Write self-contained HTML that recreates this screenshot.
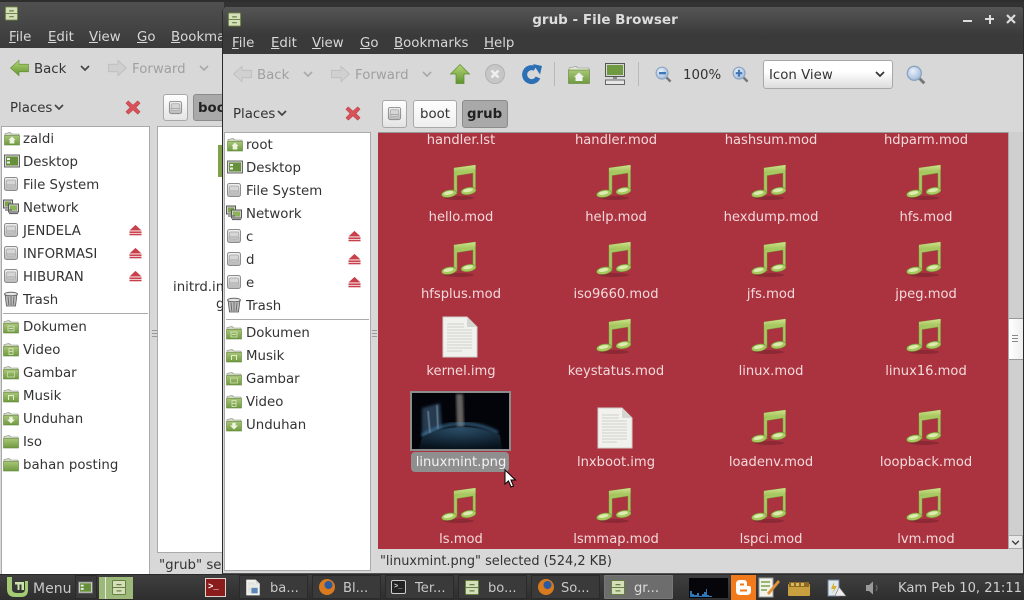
<!DOCTYPE html>
<html><head><meta charset="utf-8"><title>grub - File Browser</title>
<style>
html,body{margin:0;padding:0;width:1024px;height:600px;overflow:hidden;background:#333}
body{position:relative;font-family:"DejaVu Sans","Liberation Sans",sans-serif;font-size:13.33px;color:#333}
div,span.a,svg.a{position:absolute}
.t{position:absolute;white-space:nowrap;line-height:20px;height:16px}
.m{color:#d8d8d8}
.g{color:#a0a0a0}
.l{position:absolute;width:150px;text-align:center;white-space:nowrap;line-height:20px;height:16px;color:#f3d9da;font-size:13.1px}
svg.i{position:absolute;overflow:visible}
.btn{background:linear-gradient(#fff,#e4e4e4);border:1px solid #a8a8a8;border-radius:3px;box-sizing:border-box}
.on{background:#a9a9a9;border:1px solid #8c8c8c;border-radius:3px;box-sizing:border-box}
.tb{position:absolute;top:575px;height:24px;width:69px;background:#3a3a3a;border:1px solid #2a2a2a;box-sizing:border-box;border-radius:1px}
.tt{position:absolute;top:579px;color:#c8c8c8;white-space:nowrap;line-height:20px;font-size:13.1px}
</style></head><body>
<svg width="0" height="0" style="position:absolute">
<defs>
<linearGradient id="ng" x1="0" y1="0" x2="0" y2="1"><stop offset="0" stop-color="#cfe38c"/><stop offset="1" stop-color="#9cbf55"/></linearGradient>
<linearGradient id="fg" x1="0" y1="0" x2="0" y2="1"><stop offset="0" stop-color="#a9c777"/><stop offset="1" stop-color="#6f9a3f"/></linearGradient>
<linearGradient id="dg" x1="0" y1="0" x2="0" y2="1"><stop offset="0" stop-color="#f2f2f2"/><stop offset="1" stop-color="#b8b8b8"/></linearGradient>
<linearGradient id="ag" x1="0" y1="0" x2="0" y2="1"><stop offset="0" stop-color="#b6d676"/><stop offset="1" stop-color="#5f9430"/></linearGradient>
<radialGradient id="mg" cx=".4" cy=".35" r=".7"><stop offset="0" stop-color="#eaf1fa"/><stop offset="1" stop-color="#9db8d8"/></radialGradient>
<filter id="b1"><feGaussianBlur stdDeviation="1.200"/></filter>
<filter id="b2"><feGaussianBlur stdDeviation=".5"/></filter>
<symbol id="note" viewBox="0 0 40 40">
<ellipse cx="19" cy="36" rx="15" ry="2" fill="#000" opacity=".18"/>
<path d="M14 6 L35.500 3 V29 H33 V11 L17 13.500 V32 H14Z" fill="#a8c862" stroke="#7f9f3e" stroke-width=".5"/>
<path d="M14 6 L35.500 3 V8 L14 11Z" fill="url(#ng)"/>
<ellipse cx="9" cy="31.700" rx="7.500" ry="3.600" transform="rotate(-10 9 31.700)" fill="#a9c95f" stroke="#6d8c35" stroke-width=".5"/>
<ellipse cx="8.500" cy="31" rx="5" ry="1.800" transform="rotate(-10 8.500 31)" fill="#dcebb0"/>
<ellipse cx="28.500" cy="29" rx="7.500" ry="3.600" transform="rotate(-10 28.500 29)" fill="#a9c95f" stroke="#6d8c35" stroke-width=".5"/>
<ellipse cx="28" cy="28.300" rx="5" ry="1.800" transform="rotate(-10 28 28.300)" fill="#dcebb0"/>
</symbol>
<symbol id="doc" viewBox="0 0 36 42">
<path d="M1 1 H25 L35 11 V41 H1Z" fill="#f1f1ee" stroke="#cfcfcb" stroke-width="1"/>
<path d="M25 1 L35 11 H25Z" fill="#d4d4d0"/>
<path d="M5 8H22M5 11H22M5 14H30M5 17H30M5 20H30M5 23H30M5 26H30M5 29H30M5 32H30M5 35H20" stroke="#c4c4c0" stroke-width=".8"/>
</symbol>
<symbol id="fold" viewBox="0 0 16 16">
<path d="M1 3.500 L6 2.500 L8 4 H15 V7 H1Z" fill="#d2d8c6" stroke="#8a8f7e" stroke-width=".6"/>
<rect x=".5" y="5.500" width="15" height="9.500" fill="url(#fg)" stroke="#62853a" stroke-width=".6"/>
</symbol>
<symbol id="fhome" viewBox="0 0 16 16"><use href="#fold" width="16" height="16"/><path d="M8 6.500L11.500 10H10.300V13.500H5.700V10H4.500Z" fill="#eef3e2"/></symbol>
<symbol id="fdoc" viewBox="0 0 16 16"><use href="#fold" width="16" height="16"/><path d="M5 8H11V13H5Z" fill="none" stroke="#dfe9cc" stroke-width=".8"/><path d="M6 10.500H10" stroke="#dfe9cc" stroke-width=".8"/></symbol>
<symbol id="fvid" viewBox="0 0 16 16"><use href="#fold" width="16" height="16"/><path d="M6 7.500H10V13.500H6Z M6 10.500H10" fill="none" stroke="#dfe9cc" stroke-width=".8"/></symbol>
<symbol id="fpic" viewBox="0 0 16 16"><use href="#fold" width="16" height="16"/><rect x="4.500" y="8" width="7" height="5" fill="none" stroke="#cfdcb6" stroke-width=".8"/></symbol>
<symbol id="fmus" viewBox="0 0 16 16"><use href="#fold" width="16" height="16"/><path d="M5.500 13V8.500H10.500V13" fill="none" stroke="#e4edd2" stroke-width="1"/></symbol>
<symbol id="fdl" viewBox="0 0 16 16"><use href="#fold" width="16" height="16"/><path d="M6.300 6.800H9.700V9.500H12L8 13.500L4 9.500H6.300Z" fill="#eef3e2"/></symbol>
<symbol id="drive" viewBox="0 0 16 16">
<rect x="1.500" y="1.500" width="13" height="13" rx="2" fill="url(#dg)" stroke="#8c8c8c"/>
<rect x="3.500" y="4" width="9" height="7" rx="1" fill="#d6d6d6" stroke="#a6a6a6" stroke-width=".7"/>
<path d="M4 9H12" stroke="#999" stroke-width=".8"/>
</symbol>
<symbol id="desk" viewBox="0 0 16 16">
<rect x=".5" y="2" width="15" height="12" fill="#d8d8d8" stroke="#666"/>
<rect x="2" y="3.500" width="12" height="9" fill="#66913a"/>
<rect x="3" y="5" width="3" height="2" fill="#eee"/><rect x="3" y="8.500" width="3" height="2" fill="#eee"/>
</symbol>
<symbol id="net" viewBox="0 0 16 16">
<rect x=".5" y="1" width="9" height="8" fill="#cfcfcf" stroke="#555"/><rect x="2" y="2.500" width="6" height="5" fill="#7ba34b"/>
<rect x="5.500" y="5" width="10" height="8" fill="#cfcfcf" stroke="#555"/><rect x="7" y="6.500" width="7" height="5" fill="#8cb356"/>
<path d="M2 11 H9 M6 14.500 H15" stroke="#666" stroke-width="1.200"/>
</symbol>
<symbol id="trash" viewBox="0 0 16 16">
<path d="M2 3 H14 L12.500 15 H3.500Z" fill="#bcbcbc" stroke="#555" stroke-width=".8"/>
<ellipse cx="8" cy="3" rx="6.500" ry="1.800" fill="#e6e6e6" stroke="#555" stroke-width=".8"/>
<path d="M5 5.500 L5.800 14 M8 5.500V14 M11 5.500 L10.200 14" stroke="#666" stroke-width=".9"/>
</symbol>
<symbol id="ej" viewBox="0 0 14 12">
<path d="M7 .5 L13.500 6.500 H.5Z" fill="#c8404c"/><rect x=".5" y="7.500" width="13" height="1.700" fill="#c8404c"/><rect x=".5" y="10" width="13" height="1.700" fill="#c8404c"/>
</symbol>
<symbol id="x" viewBox="0 0 16 16">
<path d="M3 1 L8 5.500 L13 1 L15.500 3.500 L11 8 L15.500 12.500 L13 15 L8 10.500 L3 15 L.5 12.500 L5 8 L.5 3.500Z" fill="#d9525a" stroke="#b93a42" stroke-width=".6"/>
</symbol>
<symbol id="chev" viewBox="0 0 10 6"><path d="M1 1 L5 5 L9 1" fill="none" stroke="currentColor" stroke-width="1.700"/></symbol>
<symbol id="arrL" viewBox="0 0 20 18"><path d="M.5 9 L9.500 .8 V5 H19.500 V13 H9.500 V17.200Z"/></symbol>
<symbol id="arrR" viewBox="0 0 20 18"><path d="M19.500 9 L10.500 .8 V5 H.5 V13 H10.500 V17.200Z"/></symbol>
<symbol id="mag" viewBox="0 0 18 18">
<path d="M11.500 11.500 L16.500 16.500" stroke="#777" stroke-width="2.600"/>
<circle cx="7.500" cy="7.500" r="6.300" fill="url(#mg)" stroke="#8ba3c0" stroke-width="1.200"/>
</symbol>
<symbol id="cab" viewBox="0 0 16 16">
<rect x="1.500" y="1" width="13" height="14" rx="1" fill="#d5e0bb" stroke="#67803f"/>
<path d="M1.500 8H14.500" stroke="#67803f"/><path d="M5.500 4.500H10.500V5.800H5.500Z M5.500 10.800H10.500V12H5.500Z" fill="#67803f"/>
</symbol>
</defs></svg>

<!-- back window -->
<div style="left:0;top:0;width:1024px;height:2px;background:#2e2e2e"></div>
<div style="left:0;top:2px;width:224px;height:46px;background:linear-gradient(#505050,#3a3a3a)"></div>
<svg class="i" style="left:4px;top:6px" width="15" height="15"><use href="#cab"/></svg>
<div class="t m" style="left:9px;top:28px"><u>F</u>ile</div>
<div class="t m" style="left:48px;top:28px"><u>E</u>dit</div>
<div class="t m" style="left:89px;top:28px"><u>V</u>iew</div>
<div class="t m" style="left:137px;top:28px"><u>G</u>o</div>
<div class="t m" style="left:171px;top:28px"><u>B</u>ookma</div>
<div style="left:0;top:48px;width:224px;height:527px;background:#d8d8d8"></div>
<svg class="i" style="left:10px;top:59px;fill:url(#ag);stroke:#5e8a30;stroke-width:.6" width="19" height="18"><use href="#arrL"/></svg>
<div class="t" style="left:34px;top:60px">Back</div>
<svg class="i" style="left:80px;top:65px;color:#444" width="10" height="6"><use href="#chev"/></svg>
<svg class="i" style="left:108px;top:59px;fill:#cfcfcf;stroke:#b4b4b4;stroke-width:.6" width="19" height="18"><use href="#arrR"/></svg>
<div class="t g" style="left:132px;top:60px">Forward</div>
<svg class="i" style="left:199px;top:65px;color:#aaa" width="10" height="6"><use href="#chev"/></svg>
<div class="t" style="left:10px;top:99px">Places</div>
<svg class="i" style="left:54px;top:104px;color:#444" width="10" height="6"><use href="#chev"/></svg>
<svg class="i" style="left:125px;top:100px" width="16" height="15"><use href="#x"/></svg>
<div class="btn" style="left:163px;top:94px;width:25px;height:27px"></div>
<svg class="i" style="left:168px;top:100px" width="15" height="15"><use href="#drive"/></svg>
<div class="on" style="left:193px;top:94px;width:45px;height:27px"></div>
<div class="t" style="left:198px;top:99px;font-weight:bold;color:#222">boot</div>
<div style="left:1px;top:126px;width:149px;height:449px;background:#fff;border:1px solid #aaa;box-sizing:border-box;border-bottom:0"></div>
<div style="left:157px;top:126px;width:70px;height:427px;background:#fff;border:1px solid #aaa;box-sizing:border-box"></div>
<div style="left:218px;top:145px;width:6px;height:32px;background:#7fa24b"></div>
<div class="t" style="left:173px;top:278px">initrd.img</div>
<div class="t" style="left:216px;top:295px">g</div>
<div class="t" style="left:159px;top:556px">"grub" selected</div>
<div style="left:152px;top:330px;width:5px;height:1px;background:#999"></div>
<div style="left:152px;top:333px;width:5px;height:1px;background:#999"></div>
<div style="left:152px;top:336px;width:5px;height:1px;background:#999"></div>

<svg class="i" style="left:4px;top:130px" width="16" height="16"><use href="#fhome"/></svg><div class="t" style="left:23px;top:130px">zaldi</div>
<svg class="i" style="left:4px;top:153px" width="16" height="16"><use href="#desk"/></svg><div class="t" style="left:23px;top:153px">Desktop</div>
<svg class="i" style="left:3px;top:176px" width="16" height="16"><use href="#drive"/></svg><div class="t" style="left:23px;top:176px">File System</div>
<svg class="i" style="left:3px;top:199px" width="16" height="16"><use href="#net"/></svg><div class="t" style="left:23px;top:199px">Network</div>
<svg class="i" style="left:3px;top:222px" width="16" height="16"><use href="#drive"/></svg><div class="t" style="left:23px;top:222px">JENDELA</div>
<svg class="i" style="left:129px;top:224px" width="13" height="12"><use href="#ej"/></svg>
<svg class="i" style="left:3px;top:245px" width="16" height="16"><use href="#drive"/></svg><div class="t" style="left:23px;top:245px">INFORMASI</div>
<svg class="i" style="left:129px;top:247px" width="13" height="12"><use href="#ej"/></svg>
<svg class="i" style="left:3px;top:268px" width="16" height="16"><use href="#drive"/></svg><div class="t" style="left:23px;top:268px">HIBURAN</div>
<svg class="i" style="left:129px;top:270px" width="13" height="12"><use href="#ej"/></svg>
<svg class="i" style="left:3px;top:291px" width="16" height="16"><use href="#trash"/></svg><div class="t" style="left:23px;top:291px">Trash</div>
<div style="left:3px;top:313px;width:145px;height:1px;background:#aaa"></div>
<svg class="i" style="left:3px;top:318px" width="16" height="16"><use href="#fdoc"/></svg><div class="t" style="left:23px;top:318px">Dokumen</div>
<svg class="i" style="left:3px;top:341px" width="16" height="16"><use href="#fvid"/></svg><div class="t" style="left:23px;top:341px">Video</div>
<svg class="i" style="left:3px;top:364px" width="16" height="16"><use href="#fpic"/></svg><div class="t" style="left:23px;top:364px">Gambar</div>
<svg class="i" style="left:3px;top:387px" width="16" height="16"><use href="#fmus"/></svg><div class="t" style="left:23px;top:387px">Musik</div>
<svg class="i" style="left:3px;top:410px" width="16" height="16"><use href="#fdl"/></svg><div class="t" style="left:23px;top:410px">Unduhan</div>
<svg class="i" style="left:3px;top:433px" width="16" height="16"><use href="#fold"/></svg><div class="t" style="left:23px;top:433px">Iso</div>
<svg class="i" style="left:3px;top:456px" width="16" height="16"><use href="#fold"/></svg><div class="t" style="left:23px;top:456px">bahan posting</div>

<!-- front window -->
<div style="left:222px;top:7px;width:802px;height:567px;background:#d8d8d8;border-left:1px solid #2a2a2a;box-sizing:border-box;border-radius:5px 5px 0 0;border-bottom:1px solid #555"></div>
<div style="left:223px;top:7px;width:801px;height:47px;background:linear-gradient(#555,#3a3a3a 60%);border-radius:4px 4px 0 0"></div>
<svg class="i" style="left:227px;top:12px" width="15" height="15"><use href="#cab"/></svg>
<div class="t" style="left:455px;width:300px;text-align:center;top:10px;font-weight:bold;color:#ddd;font-size:13.5px">grub - File Browser</div>
<div style="left:963px;top:20px;width:9px;height:2px;background:#ddd"></div>
<div style="left:985px;top:18px;width:9px;height:2px;background:#ddd"></div>
<div style="left:988.500px;top:14.500px;width:2px;height:9px;background:#ddd"></div>
<svg class="i" style="left:1006px;top:14px" width="10" height="10"><path d="M1 1L9 9M9 1L1 9" stroke="#ddd" stroke-width="2.200"/></svg>
<div class="t m" style="left:232px;top:34px"><u>F</u>ile</div>
<div class="t m" style="left:271px;top:34px"><u>E</u>dit</div>
<div class="t m" style="left:312px;top:34px"><u>V</u>iew</div>
<div class="t m" style="left:360px;top:34px"><u>G</u>o</div>
<div class="t m" style="left:394px;top:34px"><u>B</u>ookmarks</div>
<div class="t m" style="left:484px;top:34px"><u>H</u>elp</div>

<svg class="i" style="left:233px;top:65px;fill:#d0d0d0;stroke:#b4b4b4;stroke-width:.6" width="19" height="18"><use href="#arrL"/></svg>
<div class="t g" style="left:257px;top:66px">Back</div>
<svg class="i" style="left:303px;top:71px;color:#aaa" width="10" height="6"><use href="#chev"/></svg>
<svg class="i" style="left:331px;top:65px;fill:#d0d0d0;stroke:#b4b4b4;stroke-width:.6" width="19" height="18"><use href="#arrR"/></svg>
<div class="t g" style="left:355px;top:66px">Forward</div>
<svg class="i" style="left:422px;top:71px;color:#aaa" width="10" height="6"><use href="#chev"/></svg>
<svg class="i" style="left:450px;top:64px" width="20" height="20"><path d="M10 .5 L19.500 10 H14 V19.500 H6 V10 H.5Z" fill="url(#ag)" stroke="#5e8a30" stroke-width=".7"/></svg>
<svg class="i" style="left:485px;top:64px" width="20" height="20"><circle cx="10" cy="10" r="9.500" fill="#c6c6c6" stroke="#b2b2b2"/><path d="M6.500 6.500L13.500 13.500M13.500 6.500L6.500 13.500" stroke="#eee" stroke-width="2.600"/></svg>
<svg class="i" style="left:521px;top:63px" width="22" height="22"><path d="M17 14.500 A7 7 0 1 1 14 5.500" fill="none" stroke="#2d6fb5" stroke-width="5"/><path d="M12 1 L21 3 L19 11.500Z" fill="#2d6fb5"/></svg>
<div style="left:554px;top:62px;width:1px;height:24px;background:#b8b8b8"></div>
<svg class="i" style="left:568px;top:65px" width="22" height="19" viewBox="0 0 22 19"><path d="M1 3 L8 1.500 L10 3 H21 V7 H1Z" fill="#e4e8da" stroke="#8a8f7e" stroke-width=".6"/><rect x=".5" y="5" width="21" height="13.500" fill="url(#fg)" stroke="#62853a" stroke-width=".6"/><path d="M11 7.500L16 12H14.500V16H7.500V12H6Z" fill="#f2f2f2"/></svg>
<svg class="i" style="left:605px;top:63px" width="20" height="22" viewBox="0 0 20 22"><rect x=".5" y=".5" width="19" height="13" fill="#d6d6d6" stroke="#555"/><rect x="2" y="2" width="16" height="10" fill="#6f9a3f"/><rect x="8" y="14" width="4" height="2" fill="#888"/><rect x=".5" y="17" width="19" height="4.500" fill="#e6e6e6" stroke="#666"/></svg>
<div style="left:638px;top:62px;width:1px;height:24px;background:#b8b8b8"></div>
<svg class="i" style="left:655px;top:66px" width="17" height="17"><use href="#mag"/><rect x="4" y="6" width="7" height="2.300" fill="#3f76b5"/></svg>
<div class="t" style="left:683px;top:66px">100%</div>
<svg class="i" style="left:732px;top:66px" width="17" height="17"><use href="#mag"/><path d="M7 3.800V10.600M3.800 7.200H10.200" stroke="#3f76b5" stroke-width="2.200"/></svg>
<div class="btn" style="left:763px;top:60px;width:130px;height:29px;background:linear-gradient(#fff 40%,#dcdcdc)"></div>
<div class="t" style="left:769px;top:66px">Icon View</div>
<svg class="i" style="left:875px;top:71px;color:#333" width="10" height="6"><use href="#chev"/></svg>
<svg class="i" style="left:906px;top:65px" width="20" height="20"><use href="#mag"/></svg>

<div class="t" style="left:233px;top:105px">Places</div>
<svg class="i" style="left:277px;top:110px;color:#444" width="10" height="6"><use href="#chev"/></svg>
<svg class="i" style="left:345px;top:106px" width="16" height="15"><use href="#x"/></svg>
<div class="btn" style="left:382px;top:100px;width:25px;height:28px"></div>
<svg class="i" style="left:387px;top:106px" width="15" height="15"><use href="#drive"/></svg>
<div class="btn" style="left:413px;top:100px;width:44px;height:28px;background:linear-gradient(#fff,#eee)"></div>
<div class="t" style="left:420px;top:105px">boot</div>
<div class="on" style="left:462px;top:100px;width:46px;height:28px"></div>
<div class="t" style="left:467px;top:105px;font-weight:bold;color:#222">grub</div>

<div style="left:224px;top:132px;width:147px;height:439px;background:#fff;border:1px solid #aaa;box-sizing:border-box"></div>
<svg class="i" style="left:227px;top:136px" width="16" height="16"><use href="#fhome"/></svg><div class="t" style="left:246px;top:136px">root</div>
<svg class="i" style="left:227px;top:159px" width="16" height="16"><use href="#desk"/></svg><div class="t" style="left:246px;top:159px">Desktop</div>
<svg class="i" style="left:226px;top:182px" width="16" height="16"><use href="#drive"/></svg><div class="t" style="left:246px;top:182px">File System</div>
<svg class="i" style="left:226px;top:205px" width="16" height="16"><use href="#net"/></svg><div class="t" style="left:246px;top:205px">Network</div>
<svg class="i" style="left:226px;top:228px" width="16" height="16"><use href="#drive"/></svg><div class="t" style="left:246px;top:228px">c</div>
<svg class="i" style="left:348px;top:230px" width="13" height="12"><use href="#ej"/></svg>
<svg class="i" style="left:226px;top:251px" width="16" height="16"><use href="#drive"/></svg><div class="t" style="left:246px;top:251px">d</div>
<svg class="i" style="left:348px;top:253px" width="13" height="12"><use href="#ej"/></svg>
<svg class="i" style="left:226px;top:274px" width="16" height="16"><use href="#drive"/></svg><div class="t" style="left:246px;top:274px">e</div>
<svg class="i" style="left:348px;top:276px" width="13" height="12"><use href="#ej"/></svg>
<svg class="i" style="left:226px;top:297px" width="16" height="16"><use href="#trash"/></svg><div class="t" style="left:246px;top:297px">Trash</div>
<div style="left:226px;top:319px;width:143px;height:1px;background:#aaa"></div>
<svg class="i" style="left:226px;top:324px" width="16" height="16"><use href="#fdoc"/></svg><div class="t" style="left:246px;top:324px">Dokumen</div>
<svg class="i" style="left:226px;top:347px" width="16" height="16"><use href="#fmus"/></svg><div class="t" style="left:246px;top:347px">Musik</div>
<svg class="i" style="left:226px;top:370px" width="16" height="16"><use href="#fpic"/></svg><div class="t" style="left:246px;top:370px">Gambar</div>
<svg class="i" style="left:226px;top:393px" width="16" height="16"><use href="#fvid"/></svg><div class="t" style="left:246px;top:393px">Video</div>
<svg class="i" style="left:226px;top:416px" width="16" height="16"><use href="#fdl"/></svg><div class="t" style="left:246px;top:416px">Unduhan</div>

<div style="left:372px;top:330px;width:5px;height:1px;background:#999"></div>
<div style="left:372px;top:333px;width:5px;height:1px;background:#999"></div>
<div style="left:372px;top:336px;width:5px;height:1px;background:#999"></div>

<!-- main -->
<div style="left:378px;top:133px;width:630px;height:416px;background:#ab3340;overflow:hidden"></div>
<div style="left:378px;top:132px;width:630px;height:1px;background:#999"></div>
<div class="l" style="left:386px;top:131px">handler.lst</div>
<div class="l" style="left:541px;top:131px">handler.mod</div>
<div class="l" style="left:696px;top:131px">hashsum.mod</div>
<div class="l" style="left:851px;top:131px">hdparm.mod</div>

<svg class="i" style="left:440px;top:162px" width="40" height="40"><use href="#note"/></svg>
<svg class="i" style="left:595px;top:162px" width="40" height="40"><use href="#note"/></svg>
<svg class="i" style="left:750px;top:162px" width="40" height="40"><use href="#note"/></svg>
<svg class="i" style="left:905px;top:162px" width="40" height="40"><use href="#note"/></svg>
<div class="l" style="left:386px;top:208px">hello.mod</div>
<div class="l" style="left:541px;top:208px">help.mod</div>
<div class="l" style="left:696px;top:208px">hexdump.mod</div>
<div class="l" style="left:851px;top:208px">hfs.mod</div>

<svg class="i" style="left:440px;top:239px" width="40" height="40"><use href="#note"/></svg>
<svg class="i" style="left:595px;top:239px" width="40" height="40"><use href="#note"/></svg>
<svg class="i" style="left:750px;top:239px" width="40" height="40"><use href="#note"/></svg>
<svg class="i" style="left:905px;top:239px" width="40" height="40"><use href="#note"/></svg>
<div class="l" style="left:386px;top:285px">hfsplus.mod</div>
<div class="l" style="left:541px;top:285px">iso9660.mod</div>
<div class="l" style="left:696px;top:285px">jfs.mod</div>
<div class="l" style="left:851px;top:285px">jpeg.mod</div>

<svg class="i" style="left:442px;top:316px" width="36" height="42"><use href="#doc"/></svg>
<svg class="i" style="left:595px;top:316px" width="40" height="40"><use href="#note"/></svg>
<svg class="i" style="left:750px;top:316px" width="40" height="40"><use href="#note"/></svg>
<svg class="i" style="left:905px;top:316px" width="40" height="40"><use href="#note"/></svg>
<div class="l" style="left:386px;top:362px">kernel.img</div>
<div class="l" style="left:541px;top:362px">keystatus.mod</div>
<div class="l" style="left:696px;top:362px">linux.mod</div>
<div class="l" style="left:851px;top:362px">linux16.mod</div>

<svg class="i" style="left:410px;top:391px;overflow:hidden" width="101" height="60" viewBox="0 0 101 60">
<defs><radialGradient id="pl" cx=".5" cy=".1" r=".9"><stop offset="0" stop-color="#2a4c66"/><stop offset="1" stop-color="#07121c"/></radialGradient></defs>
<rect x="0" y="0" width="101" height="60" fill="#8c8c8c"/>
<rect x="2" y="2" width="97" height="56" fill="#02040a"/>
<path d="M12 17 L30 12 L32 37 L12 46Z" fill="#45688a" opacity=".55" filter="url(#b1)"/>
<path d="M18 20 L20 42 M27 14 L28 38" stroke="#9ab4c8" stroke-width="1.500" opacity=".6" filter="url(#b2)"/>
<path d="M46 3 H53 L54 36 H47Z" fill="#8f8a84" opacity=".7" filter="url(#b1)"/>
<path d="M12 45 Q50 22 88 42" fill="none" stroke="#4a8ab5" stroke-width="4" opacity=".5" filter="url(#b1)"/>
<path d="M12 46 Q50 27 90 44 L92 58 H9Z" fill="url(#pl)"/>
<rect x="0" y="0" width="101" height="2" fill="#8c8c8c"/><rect x="0" y="58" width="101" height="2" fill="#8c8c8c"/>
</svg>
<div style="left:411px;top:452px;width:98px;height:20px;background:#8f8f8f;border-radius:4px"></div>
<div class="l" style="left:386px;top:453px;color:#f2f2f2">linuxmint.png</div>
<svg class="i" style="left:597px;top:407px" width="36" height="42"><use href="#doc"/></svg>
<svg class="i" style="left:750px;top:407px" width="40" height="40"><use href="#note"/></svg>
<svg class="i" style="left:905px;top:407px" width="40" height="40"><use href="#note"/></svg>
<div class="l" style="left:541px;top:453px">lnxboot.img</div>
<div class="l" style="left:696px;top:453px">loadenv.mod</div>
<div class="l" style="left:851px;top:453px">loopback.mod</div>

<svg class="i" style="left:440px;top:485px" width="40" height="40"><use href="#note"/></svg>
<svg class="i" style="left:595px;top:485px" width="40" height="40"><use href="#note"/></svg>
<svg class="i" style="left:750px;top:485px" width="40" height="40"><use href="#note"/></svg>
<svg class="i" style="left:905px;top:485px" width="40" height="40"><use href="#note"/></svg>
<div class="l" style="left:386px;top:530px">ls.mod</div>
<div class="l" style="left:541px;top:530px">lsmmap.mod</div>
<div class="l" style="left:696px;top:530px">lspci.mod</div>
<div class="l" style="left:851px;top:530px">lvm.mod</div>

<svg class="i" style="left:504px;top:469px" width="13" height="20" viewBox="0 0 13 20"><path d="M1 1 V15 L4.500 12 L7 18 L9.500 17 L7 11 H11.500Z" fill="#fff" stroke="#000" stroke-width="1"/></svg>

<!-- scrollbar -->
<div style="left:1008px;top:132px;width:15px;height:417px;background:#cfcfcf;border-left:1px solid #aaa;box-sizing:border-box"></div>
<div style="left:1009px;top:318px;width:14px;height:42px;background:linear-gradient(90deg,#fff,#eee);border-top:1px solid #999;border-bottom:1px solid #999;box-sizing:border-box"></div>
<div style="left:1012px;top:335px;width:6px;height:1px;background:#888"></div>
<div style="left:1012px;top:338px;width:6px;height:1px;background:#888"></div>
<div style="left:1012px;top:341px;width:6px;height:1px;background:#888"></div>
<div style="left:1008px;top:535px;width:15px;height:14px;background:#e8e8e8;border:1px solid #aaa;box-sizing:border-box"></div>
<svg class="i" style="left:1011px;top:540px;color:#444" width="9" height="5"><use href="#chev"/></svg>
<div style="left:1023px;top:7px;width:1px;height:567px;background:#2a2a2a"></div>

<div class="t" style="left:380px;top:552px;font-size:12.9px">"linuxmint.png" selected (524,2 KB)</div>

<!-- taskbar -->
<div style="left:0;top:574px;width:1024px;height:26px;background:linear-gradient(#3f3f3f,#2e2e2e);border-top:1px solid #2a2a2a;box-sizing:border-box"></div>
<svg class="i" style="left:6px;top:576px" width="23" height="22" viewBox="0 0 23 22"><path d="M1 1 H6 V13 Q6 17 11 17 H15 Q19 17 19 13 V5 H22 V14 Q22 21 15 21 H9 Q1 21 1 13Z" fill="#a3cb73"/><path d="M9 6 H18 V14 H15.500 V8.500 H13.500 V14 H11.500 V8.500 H9Z" fill="#cde3ac"/></svg>
<div class="tt" style="left:33px;font-size:14px">Menu</div>
<div class="tb" style="left:75px;width:22px"></div>
<svg class="i" style="left:78px;top:580px" width="15" height="15"><use href="#desk"/></svg>
<div style="left:99px;top:577px;width:34px;height:22px;background:#9cb97a"></div>
<div style="left:105px;top:577px;width:1px;height:22px;background:#e8e8e8"></div>
<svg class="i" style="left:111px;top:579px" width="16" height="17"><use href="#cab"/></svg>
<div style="left:205px;top:578px;width:21px;height:19px;background:#8a1c1c;border:1px solid #e0d0d0;box-sizing:border-box"></div>
<div style="left:208px;top:582px;font:bold 9px 'Liberation Mono',monospace;color:#fff;line-height:11px">&gt;_</div>

<div class="tb" style="left:239px"></div>
<svg class="i" style="left:246px;top:579px" width="14" height="17" viewBox="0 0 36 42"><use href="#doc" width="36" height="42"/><rect x="14" y="22" width="16" height="14" fill="#5a86b8"/></svg>
<div class="tt" style="left:270px">ba...</div>
<div class="tb" style="left:312px"></div>
<svg class="i" style="left:318px;top:578px" width="18" height="18"><circle cx="9" cy="9" r="8" fill="#d97a1e"/><circle cx="10.500" cy="7" r="4" fill="#2a5a9f"/></svg>
<div class="tt" style="left:343px">Bl...</div>
<div class="tb" style="left:385px"></div>
<div style="left:391px;top:580px;width:15px;height:14px;background:#222;border:1px solid #ccc;box-sizing:border-box;border-radius:2px"></div>
<div style="left:394px;top:583px;font:bold 7px 'Liberation Mono',monospace;color:#ddd;line-height:8px">&gt;_</div>
<div class="tt" style="left:415px">Ter...</div>
<div class="tb" style="left:458px"></div>
<svg class="i" style="left:464px;top:579px" width="16" height="17"><use href="#cab"/></svg>
<div class="tt" style="left:488px">bo...</div>
<div class="tb" style="left:531px"></div>
<svg class="i" style="left:537px;top:578px" width="18" height="18"><circle cx="9" cy="9" r="8" fill="#d97a1e"/><circle cx="10.500" cy="7" r="4" fill="#2a5a9f"/></svg>
<div class="tt" style="left:561px">So...</div>
<div class="tb" style="left:604px;background:#6d6d6d;border-color:#777"></div>
<svg class="i" style="left:610px;top:579px" width="16" height="17"><use href="#cab"/></svg>
<div class="tt" style="left:634px;color:#ddd">gr...</div>

<div style="left:689px;top:578px;width:39px;height:20px;background:#05050a"></div>
<svg class="i" style="left:690px;top:586px" width="37" height="11"><path d="M0 11V5H2V8H4V9H7V7H9V10H12V8H14V6H16V3H17V9H19V10H22V11Z" fill="#2e78b8"/></svg>
<div style="left:731px;top:575px;width:25px;height:25px;background:#f07a1c"></div>
<svg class="i" style="left:735px;top:579px" width="17" height="17"><path d="M1 5 Q1 1 5 1 H9 Q12 1 12 5 V7 H14 Q16 7 16 9 V12 Q16 16 12 16 H5 Q1 16 1 12Z" fill="#fff"/><path d="M5 5.500H9M5 11.500H12" stroke="#f07a1c" stroke-width="2"/></svg>
<svg class="i" style="left:758px;top:577px" width="22" height="21" viewBox="0 0 22 21"><rect x="1" y="1" width="14" height="19" fill="#f2f2ea" stroke="#999"/><path d="M3 5H12M3 9H12M3 13H9" stroke="#7aa34a" stroke-width="1.400"/><path d="M9 16L20 3L22 5L11 18Z" fill="#e0913a"/></svg>
<svg class="i" style="left:788px;top:581px" width="22" height="15" viewBox="0 0 22 15"><rect x="0" y="3" width="22" height="12" rx="1" fill="#c9a03f"/><rect x="1" y="1" width="20" height="5" fill="#8d6b22"/><path d="M3 2H6V5H3ZM8 2H11V5H8ZM13 2H16V5H13Z" fill="#d8b860"/></svg>
<svg class="i" style="left:827px;top:578px" width="20" height="20" viewBox="0 0 20 20"><rect x="1" y="2" width="11" height="16" fill="#dfe8f0" stroke="#6a7f96"/><path d="M7 4L4 11H7L5 16L10 8H7Z" fill="#d8b030"/><path d="M12 9L19 18H8Z" fill="#eee" stroke="#777" stroke-width=".6"/></svg>
<svg class="i" style="left:865px;top:580px" width="16" height="16" viewBox="0 0 16 16"><path d="M1 5H4L8 1.500V14.500L4 11H1Z" fill="#999"/><path d="M11 5Q13 8 11 11" fill="none" stroke="#6a6a6a" stroke-width="1.200"/></svg>
<div class="tt" style="left:898px;color:#cfcfcf">Kam Peb 10, 21:11</div>
</body></html>
